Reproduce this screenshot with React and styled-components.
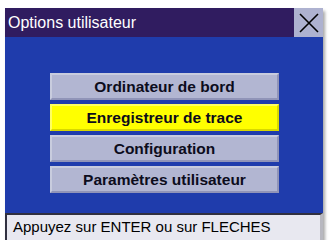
import React from "react";
import styled, { createGlobalStyle } from "styled-components";

const Global = createGlobalStyle`
  body {
    margin: 0;
    background: #ffffff;
    font-family: "Liberation Sans", Arial, sans-serif;
  }
`;

const Page = styled.div`
  padding: 8px 0 0 5px;
`;

const Screen = styled.div`
  width: 318px;
  height: 232px;
  display: flex;
  flex-direction: column;
  box-shadow: 2px 3px 3px rgba(0, 0, 0, 0.35);
`;

const TitleBar = styled.div`
  height: 29px;
  display: flex;
  align-items: stretch;
  background: #301c60;
`;

const Title = styled.div`
  flex: 1;
  color: #ffffff;
  font-size: 16px;
  line-height: 29px;
  padding-left: 3px;
`;

const Close = styled.div`
  width: 29px;
  background: #aeb2d0;
  display: flex;
  align-items: center;
  justify-content: center;
`;

const Body = styled.div`
  flex: 1;
  background: #1f3cac;
  display: flex;
  flex-direction: column;
  gap: 4px;
  padding: 36px 0 0 45px;
`;

const Item = styled.div`
  width: 229px;
  height: 27px;
  box-sizing: border-box;
  display: flex;
  align-items: center;
  justify-content: center;
  font-size: 15.5px;
  font-weight: bold;
  color: #0c0c1c;
  background: ${(p) => (p.$active ? "#ffff00" : "#b2b6d2")};
  border-top: 2px solid ${(p) => (p.$active ? "#ffff60" : "#c8ccde")};
  border-left: 2px solid ${(p) => (p.$active ? "#ffff60" : "#c8ccde")};
  border-bottom: 2px solid ${(p) => (p.$active ? "#d8d800" : "#9094b8")};
  border-right: 2px solid ${(p) => (p.$active ? "#d8d800" : "#9094b8")};
`;

const Status = styled.div`
  height: 27px;
  box-sizing: border-box;
  background: #e8e8f0;
  border-top: 2px solid #303040;
  border-left: 2px solid #303040;
  border-right: 3px solid #b8b8c0;
  font-size: 15px;
  color: #000000;
  padding-left: 6px;
  line-height: 24px;
`;

const items = [
  "Ordinateur de bord",
  "Enregistreur de trace",
  "Configuration",
  "Paramètres utilisateur",
];

export default function App() {
  return (
    <Page>
      <Global />
      <Screen>
        <TitleBar>
          <Title>Options utilisateur</Title>
          <Close>
            <svg width="22" height="22" viewBox="0 0 22 22">
              <path d="M2 2 L20 20 M20 2 L2 20" stroke="#000" strokeWidth="1.6" />
            </svg>
          </Close>
        </TitleBar>
        <Body>
          {items.map((t, i) => (
            <Item key={t} $active={i === 1}>
              {t}
            </Item>
          ))}
        </Body>
        <Status>Appuyez sur ENTER ou sur FLECHES</Status>
      </Screen>
    </Page>
  );
}
